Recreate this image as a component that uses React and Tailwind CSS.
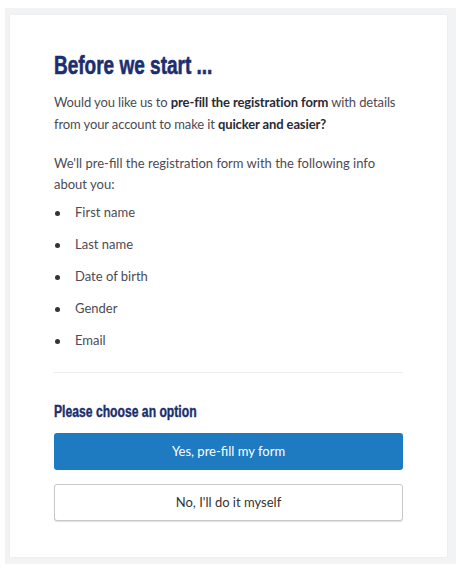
export default function App() {
  const items = ['First name', 'Last name', 'Date of birth', 'Gender', 'Email']

  return (
    <div className="w-[466px] h-[574px] bg-white pt-2 pl-[5px]">
      <div className="w-[451px] h-[556px] bg-[#f2f3f4] pt-[7px] pl-[5px]">
        <div className="w-[437px] h-[542px] bg-white shadow-[0_0_2px_rgba(0,0,0,0.06)] px-[44px] pt-[35px] font-['Lato',sans-serif] text-[#4b4b55]">
          <h1 className="h-[30px]">
            <span className="inline-block origin-left scale-x-[0.76] font-['Liberation_Sans',sans-serif] text-[25px] leading-[30px] font-bold text-[#1b2f6e] [-webkit-text-stroke:0.6px_#1b2f6e]">
              Before we start ...
            </span>
          </h1>
          <p className="mt-[11px] text-[13px] leading-[22px] tracking-[-0.12px]">
            Would you like us to <b className="font-bold text-[#2a2a33]">pre-fill the registration form</b> with details
            from your account to make it <b className="font-bold text-[#2a2a33]">quicker and easier?</b>
          </p>
          <p className="mt-[18px] text-[13px] leading-[21px]">
            We'll pre-fill the registration form with the following info about you:
          </p>
          <ul className="mt-[2px]">
            {items.map((item) => (
              <li key={item} className="flex items-center h-[32px] text-[13px]">
                <span className="w-[5px] h-[5px] rounded-full bg-[#333] ml-[1px] mr-[15px]" />
                {item}
              </li>
            ))}
          </ul>
          <div className="mt-[15px] border-t border-[#ececec]" />
          <h2 className="mt-[26px] h-[18px]">
            <span className="inline-block origin-left scale-x-[0.76] font-['Liberation_Sans',sans-serif] text-[16px] leading-[18px] font-bold text-[#1b2f6e] [-webkit-text-stroke:0.4px_#1b2f6e]">
              Please choose an option
            </span>
          </h2>
          <button className="mt-[16px] w-full h-[37px] rounded-[3px] bg-[#1e7bc1] text-white text-[13px]">
            Yes, pre-fill my form
          </button>
          <button className="mt-[14px] w-full h-[37px] rounded-[3px] bg-white border border-[#c8c8cc] shadow-[0_1px_1px_rgba(0,0,0,0.12)] text-[#333] text-[13px]">
            No, I'll do it myself
          </button>
        </div>
      </div>
    </div>
  )
}
